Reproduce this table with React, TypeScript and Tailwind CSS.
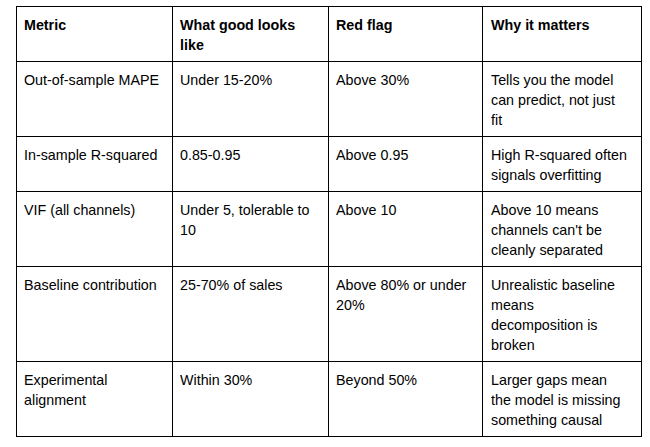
const rows = [
  {
    metric: "Out-of-sample MAPE",
    good: "Under 15-20%",
    flag: "Above 30%",
    why: "Tells you the model can predict, not just fit",
  },
  {
    metric: "In-sample R-squared",
    good: "0.85-0.95",
    flag: "Above 0.95",
    why: "High R-squared often signals overfitting",
  },
  {
    metric: "VIF (all channels)",
    good: "Under 5, tolerable to 10",
    flag: "Above 10",
    why: "Above 10 means channels can't be cleanly separated",
  },
  {
    metric: "Baseline contribution",
    good: "25-70% of sales",
    flag: "Above 80% or under 20%",
    why: "Unrealistic baseline means decomposition is broken",
  },
  {
    metric: "Experimental alignment",
    good: "Within 30%",
    flag: "Beyond 50%",
    why: "Larger gaps mean the model is missing something causal",
  },
];

const cell = "border border-black align-top pt-[8px] pb-[6px] pl-[7px] pr-[7px]";
const lastCell = "border border-black align-top pt-[8px] pb-[6px] pl-[8px] pr-[13px]";

export default function App() {
  return (
    <div className="w-[650px] h-[447px] bg-white pt-[6px] pl-[16px] font-['Liberation_Sans',Arial,sans-serif] text-[14.3px] leading-[20px] text-black">
      <table className="table-fixed border-collapse">
        <colgroup>
          <col className="w-[156px]" />
          <col className="w-[156px]" />
          <col className="w-[154px]" />
          <col className="w-[159px]" />
        </colgroup>
        <thead>
          <tr className="font-bold text-left">
            <th className={cell}>Metric</th>
            <th className={cell}>What good looks like</th>
            <th className={cell}>Red flag</th>
            <th className={lastCell}>Why it matters</th>
          </tr>
        </thead>
        <tbody>
          {rows.map((r) => (
            <tr key={r.metric}>
              <td className={cell}>{r.metric}</td>
              <td className={cell}>{r.good}</td>
              <td className={cell}>{r.flag}</td>
              <td className={lastCell}>{r.why}</td>
            </tr>
          ))}
        </tbody>
      </table>
    </div>
  );
}
